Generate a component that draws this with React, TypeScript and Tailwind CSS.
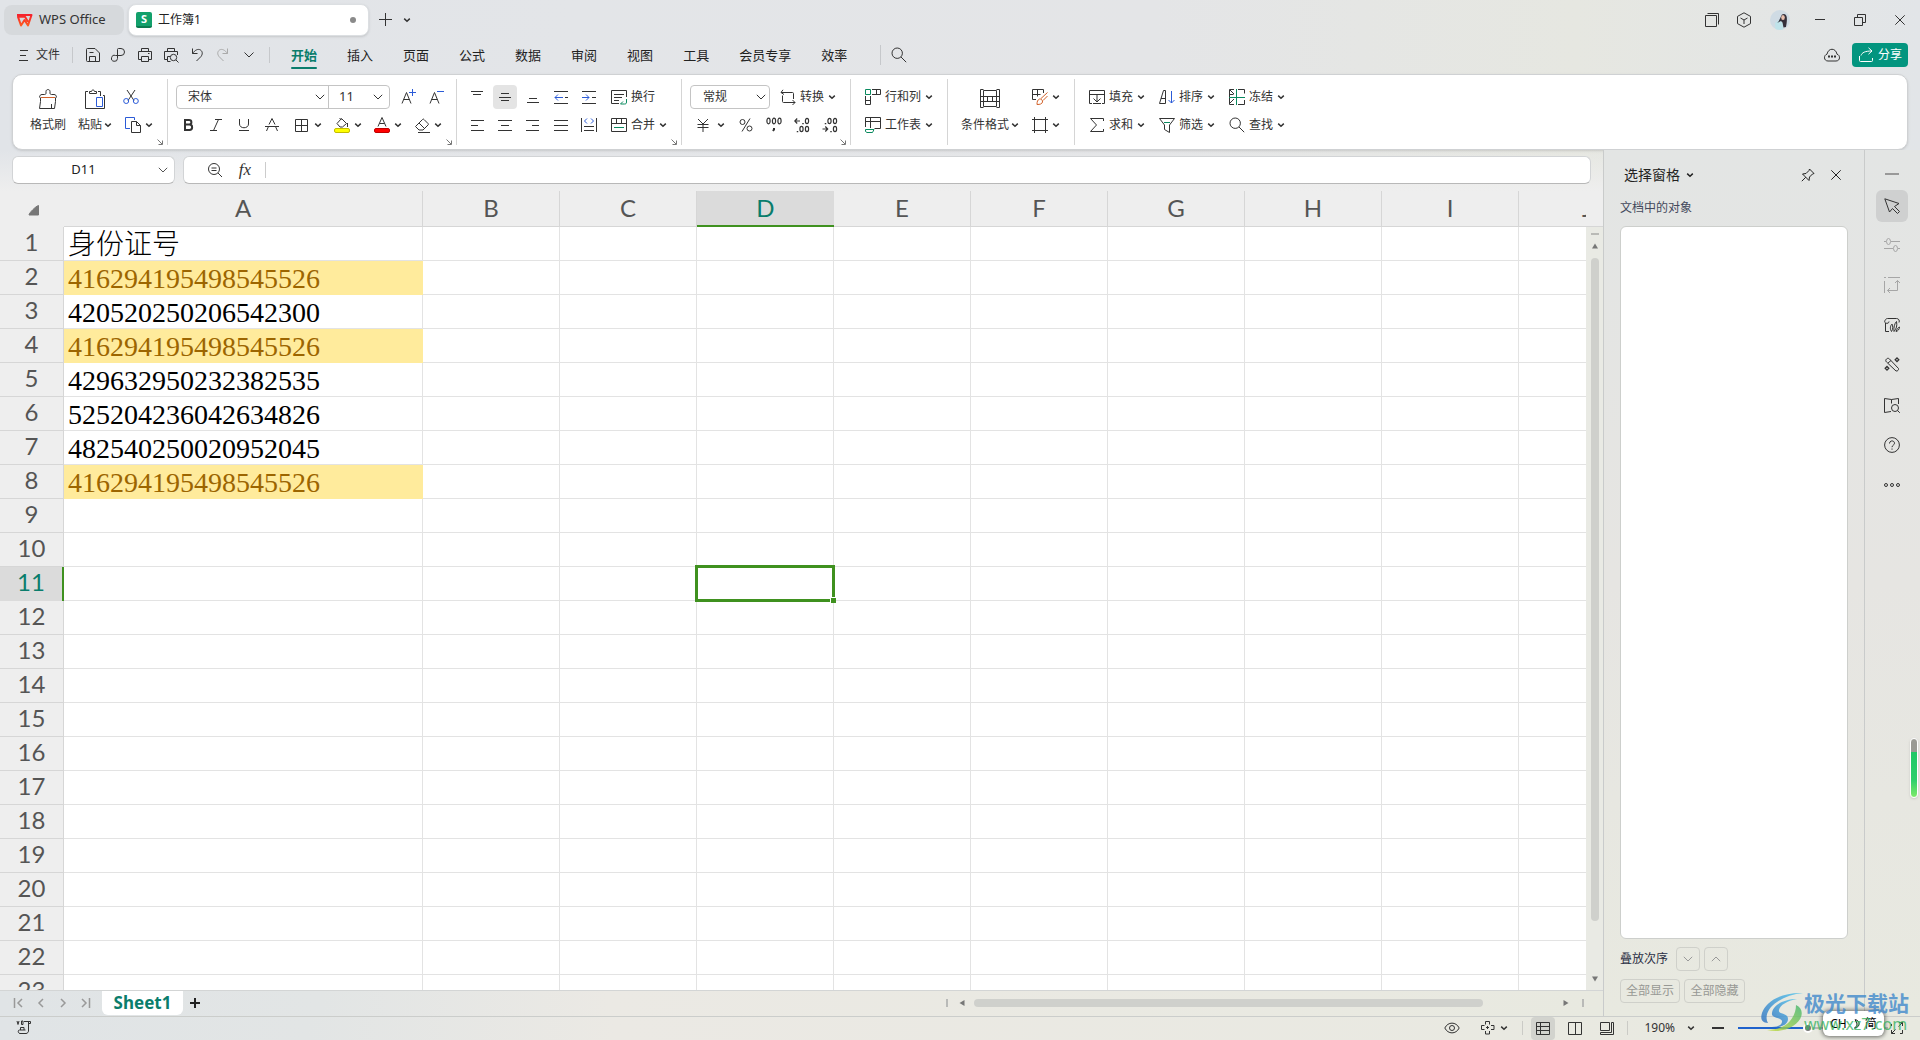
import { useState } from 'react';
import type { ReactNode } from 'react';

interface SvgProps {
  w?: number;
  h?: number;
  sw?: number;
  className?: string;
  children: ReactNode;
}

function Svg({ w = 16, h, sw = 1, className = '', children }: SvgProps) {
  const height = h ?? w;
  return (
    <svg
      width={w}
      height={height}
      viewBox={`0 0 ${w} ${height}`}
      fill="none"
      stroke="currentColor"
      strokeWidth={sw}
      className={`shrink-0 ${className}`}
      aria-hidden="true"
    >
      {children}
    </svg>
  );
}

const BLUE = '#2b5bd7';
const GREEN = '#0a8a5f';
const ORANGE = '#d2622a';

const Caret = ({ className = '' }: { className?: string }) => (
  <Svg w={8} sw={1.5} className={className}><path d="M1.2 2.6 4 5.2l2.8-2.6" /></Svg>
);

const WideCaret = ({ className = '' }: { className?: string }) => (
  <Svg w={10} className={className}><path d="m.8 2.8 4.2 4.2 4.2-4.2" /></Svg>
);

const Launcher = () => (
  <button type="button" aria-label="更多设置" className="absolute right-1 bottom-0 text-[#777]">
    <Svg w={6}><path d="m.5.5 4.6 4.6M1.5 5.5h4v-4" /></Svg>
  </button>
);

const SearchIcon = () => (
  <Svg><circle cx="6.2" cy="6.2" r="5.2" /><path d="m10 10 5.2 5.2" /></Svg>
);

const quickActions: { name: string; icon: ReactNode; faded?: boolean }[] = [
  { name: '保存', icon: <Svg><path d="M1.5 13.5v-11a1 1 0 0 1 1-1H10l4.500 4.500v8.500h-12a1 1 0 0 1-1-1M4.500 14.500v-5h6v5M4.500 5.500h4" /></Svg> },
  { name: '输出为PDF', icon: <Svg><path d="M6.500 10V2.500a1 1 0 0 1 1-1H10a3.500 3.500 0 0 1 0 7H4.500a3 3 0 1 0 2 3V10" /></Svg> },
  { name: '打印', icon: <Svg><path d="M4.500 4.500v-3h7v3M4 12.500H1.500v-8h13v8H12M4.500 9.500h7v5h-7zM11 6.500h1.500" /></Svg> },
  { name: '打印预览', icon: <Svg><path d="M4.500 4.500v-3h7v3M4 12.500H1.500v-8h13V8M7 9.500H4.500v5h3" /><circle cx="10.500" cy="10.500" r="3.200" /><path d="m13 13 2.500 2.500" /></Svg> },
  { name: '撤销', icon: <Svg><path d="M3.500 1.500v5h5M3.500 6.500C6 3 9 1.500 11.500 3c2.500 1.800 2 4.500.5 6.500L7.500 14" /></Svg> },
  { name: '恢复', faded: true, icon: <Svg><path d="M12.500 1.500v5h-5M12.500 6.500C10 3 7 1.500 4.500 3 2 4.800 2.500 7.500 4 9.500L8.500 14" /></Svg> },
  { name: '更多', icon: <Svg w={12}><path d="m1.500 3.500 4.500 4.500 4.500-4.500" /></Svg> },
];

const menuTabs = ['开始', '插入', '页面', '公式', '数据', '审阅', '视图', '工具', '会员专享', '效率'];

function TitleBar() {
  return (
    <header className="flex h-10 shrink-0 items-center pl-1 text-xs text-[#333]">
      <button type="button" className="flex h-[30px] w-[120px] items-center gap-1.5 rounded-lg bg-[#d6d9dc] pl-3">
        <svg width="17" height="13" viewBox="0 0 17 13" aria-hidden="true">
          <defs>
            <linearGradient id="wps" x1="0" y1="0" x2="0" y2="1">
              <stop offset="0" stopColor="#f5222d" />
              <stop offset="1" stopColor="#ff5a1f" />
            </linearGradient>
          </defs>
          <path d="M1 1h14.500L12 11.500 8.500 6 5 11.500 2 2.800h7l3 5" fill="none" stroke="url(#wps)" strokeWidth="2" strokeLinejoin="round" />
        </svg>
        <span className="text-[13px]">WPS Office</span>
      </button>
      <div className="ml-1 flex h-8 w-[241px] items-center rounded-lg border border-[#dcdfe2] bg-white pr-3 pl-[7px] shadow-sm">
        <span className="flex h-4 w-4 items-center justify-center rounded-[2px] border-b-2 border-[#0b7a4f] bg-[#12a06b] text-[11px] font-bold text-white">S</span>
        <span className="ml-1.5 flex-1 text-[#222]">工作簿1</span>
        <span className="h-1.5 w-1.5 rounded-full bg-[#8a8a8a]" />
      </div>
      <button type="button" aria-label="新建" className="ml-2.5">
        <Svg w={14}><path d="M6.500 0v13M0 6.500h13" /></Svg>
      </button>
      <button type="button" aria-label="标签列表" className="ml-2.5"><Caret /></button>
      <div className="ml-auto flex items-center">
        <button type="button" aria-label="窗口" className="flex w-8 justify-center">
          <Svg><path d="M1.500 3.500h11v11h-11zM3.500 1.500h11v11" strokeLinejoin="round" /></Svg>
        </button>
        <button type="button" aria-label="应用" className="flex w-8 justify-center">
          <Svg><path d="M8 .8 14.500 4.400v7.200L8 15.200l-6.500-3.600V4.400zM4.500 6 8 8l3.500-2M8 8v4" /></Svg>
        </button>
        <button type="button" aria-label="账号" className="flex w-10 justify-center">
          <svg width="20" height="20" viewBox="0 0 20 20" aria-hidden="true">
            <circle cx="10" cy="10" r="10" fill="#cfdbe4" />
            <path d="M5 13l5-4 3 4v6.200a10 10 0 0 1-7.500-.3z" fill="#bfe3ea" />
            <path d="M12 4.500c2.500-1.500 4.500 0 4.800 3 .3 3.500-.2 6-.8 9.500l-2.500.5-1-5-1.500-1.500-4 2c2.500-2 3.500-6 5-8.500" fill="#35303b" />
            <ellipse cx="13" cy="7.500" rx="1.800" ry="2.600" fill="#e8bfae" />
          </svg>
        </button>
        <button type="button" aria-label="最小化" className="flex w-10 justify-center"><Svg w={10}><path d="M0 4.500h10" /></Svg></button>
        <button type="button" aria-label="还原" className="flex w-10 justify-center"><Svg w={12}><path d="M.5 3.500h8v8h-8zM3.500 3.500v-3h8v8h-3" /></Svg></button>
        <button type="button" aria-label="关闭" className="flex w-10 justify-center"><Svg w={10}><path d="m.3.3 9.400 9.400M9.700.3.3 9.700" /></Svg></button>
      </div>
    </header>
  );
}

function MenuBar() {
  const [active, setActive] = useState('开始');

  return (
    <nav className="flex h-[30px] shrink-0 items-center pr-3 text-xs text-[#333]">
      <button type="button" className="ml-[19px] flex items-center gap-2">
        <Svg w={9} h={12}><path d="M1 1.500h8M1 6.500h6M0 11.500h9" /></Svg>
        文件
      </button>
      <span className="ml-3 h-4 w-px bg-[#c6c8cb]" />
      <div className="ml-[7px] flex">
        {quickActions.map((a) => (
          <button key={a.name} type="button" aria-label={a.name} className={a.faded ? 'flex w-[26px] items-center justify-center text-[#aaa]' : 'flex w-[26px] items-center justify-center'}>
            {a.icon}
          </button>
        ))}
      </div>
      <span className="ml-[7px] h-4 w-px bg-[#c6c8cb]" />
      <div className="ml-1.5 flex h-full text-[13px] text-[#222]">
        {menuTabs.map((tab) => (
          <button key={tab} type="button" onClick={() => setActive(tab)} className="flex h-full flex-col items-center px-[15px]">
            <span className={active === tab ? 'h-[27px] pt-[5px] leading-5 font-bold text-[#0a7d6c]' : 'h-[27px] pt-[5px] leading-5'}>{tab}</span>
            {active === tab && <span className="h-0.5 w-[26px] rounded-full bg-[#0a7d6c]" />}
          </button>
        ))}
      </div>
      <span className="ml-[18px] h-5 w-px bg-[#c6c8cb]" />
      <button type="button" aria-label="搜索" className="ml-2.5"><SearchIcon /></button>
      <button type="button" aria-label="云同步" className="ml-auto">
        <Svg>
          <path d="M4 14h8c4.500 0 4.500-6 1-6.800C11.800.6 4.200.6 3 7.200-.5 8-.5 14 4 14z" />
          <path d="M4 9.500h2M7 9.500h2M10 9.500h2" strokeWidth="2" />
        </Svg>
      </button>
      <button type="button" className="ml-3 flex h-6 w-14 items-center gap-1 rounded bg-[#03957f] pl-1.5 text-white">
        <Svg><path d="M1.500 9v4.500a1 1 0 0 0 1 1h11a1 1 0 0 0 1-1V11" /><path d="M3 8.500c1-3 4-4.500 11-4.500M10.500.8 14 4l-3.500 3.200" /></Svg>
        分享
      </button>
    </nav>
  );
}

interface ToolProps {
  name: string;
  icon: ReactNode;
  caret?: boolean;
}

// icon and label side by side, 24px for the icon
function LabelTool({ name, icon, caret = true }: ToolProps) {
  return (
    <button type="button" className="flex h-7 items-center">
      <span className="flex w-6 justify-center">{icon}</span>
      {name}
      {caret && <Caret className="ml-1" />}
    </button>
  );
}

function IconTool({ name, icon }: ToolProps) {
  return (
    <button type="button" aria-label={name} className="flex h-7 w-7 items-center justify-center">
      {icon}
    </button>
  );
}

function CaretTool({ name, icon }: ToolProps) {
  return (
    <button type="button" aria-label={name} className="flex h-7 w-10 items-center gap-1 pl-2">
      {icon}
      <Caret />
    </button>
  );
}

function Group({ className, launcher, children }: { className: string; launcher?: boolean; children: ReactNode }) {
  return (
    <div className={`relative flex shrink-0 border-r border-[#d5d5d5] pt-1 ${className}`}>
      {children}
      {launcher && <Launcher />}
    </div>
  );
}

const vAlign = [
  { name: '顶端对齐', icon: <Svg><path d="M2 2.500h12M4 5.500h8" /></Svg> },
  { name: '垂直居中', icon: <Svg><path d="M4 4.500h8M2 8.500h12M4 11.500h8" /></Svg> },
  { name: '底端对齐', icon: <Svg><path d="M4 9.500h8M2 13.500h12" /></Svg> },
  { name: '减少缩进', icon: <Svg><path d="M1 2.500h14M12 8.500h3M1 14.500h14" /><path d="M10 8.500H2M5 5.500l-3 3 3 3" stroke={BLUE} /></Svg> },
  { name: '增加缩进', icon: <Svg><path d="M1 2.500h14M11 8.500h4M1 14.500h14" /><path d="M1 8.500h7M5 5.500l3 3-3 3" stroke={BLUE} /></Svg> },
];

const hAlign = [
  { name: '左对齐', icon: <Svg><path d="M2 3.500h13M2 8.500h7M2 13.500h13" /></Svg> },
  { name: '居中', icon: <Svg><path d="M1 3.500h14M4 8.500h8M1 13.500h14" /></Svg> },
  { name: '右对齐', icon: <Svg><path d="M1 3.500h13M7 8.500h7M1 13.500h13" /></Svg> },
  { name: '两端对齐', icon: <Svg><path d="M1 3.500h14M1 8.500h14M1 13.500h14" /></Svg> },
  { name: '分散对齐', icon: <Svg><path d="M.5 1v14M15.500 1v14M3 9.500h10M3 13.500h10" /><path d="M6 1.500 3.500 4 6 6.500M10 1.500 12.500 4 10 6.500" stroke={BLUE} /></Svg> },
];

// zeros drawn as small ovals beside a decimal point
const decimalsUp = (
  <Svg sw={1.2}>
    <path d="M6 4H.8M3.200 1.500.8 4l2.400 2.500" />
    <path d="M9 6v1.200M3.500 14v1.200" strokeWidth="1.500" />
    <ellipse cx="13" cy="4" rx="1.600" ry="2.700" />
    <ellipse cx="7.500" cy="12" rx="1.600" ry="2.700" />
    <ellipse cx="13" cy="12" rx="1.600" ry="2.700" />
  </Svg>
);

const decimalsDown = (
  <Svg sw={1.2}>
    <path d="M.5 12h5.200M3.300 9.500 5.700 12l-2.400 2.500" />
    <path d="M3.500 6v1.200M9 14v1.200" strokeWidth="1.500" />
    <ellipse cx="7.500" cy="4" rx="1.600" ry="2.700" />
    <ellipse cx="13" cy="4" rx="1.600" ry="2.700" />
    <ellipse cx="13" cy="12" rx="1.600" ry="2.700" />
  </Svg>
);

function Ribbon() {
  return (
    <section className="mx-3 mt-1 flex h-[76px] shrink-0 overflow-hidden rounded-[10px] border border-[#cfd1d3] bg-white py-1 text-xs text-[#333] shadow-sm">
      <Group className="w-[155px]" launcher>
        <button type="button" className="ml-[17px] flex flex-col items-center pt-1.5">
          <Svg w={20}>
            <path d="M1.500 8.500c0-2 1-3 2.500-3h2.500c1 0 1.500-.5 1.500-1.500V2.500c0-2.600 4-2.600 4 0V4c0 1 .5 1.500 1.500 1.500H16c1.500 0 2.500 1 2.500 3M2.500 8.500v4L1.500 19.500h15l1-7v-4M13.500 19v-4" />
            <path d="M3 8.500h14" stroke={ORANGE} />
          </Svg>
          <span className="mt-2 leading-4">格式刷</span>
        </button>
        <button type="button" className="ml-3 flex flex-col pt-1.5">
          <Svg w={22} h={20} className="ml-1.5">
            <path d="M4 2.500H1.500v17H10M14 2.500h2.500V7M5.500 4.500v-2h2c0-2 3-2 3 0h2v2z" />
            <path d="M19 6.500h1.500v13H10" />
            <path d="M12.500 8.500h6v9h-6z" stroke={BLUE} fill="white" />
          </Svg>
          <span className="mt-2 flex items-center leading-4">粘贴<Caret className="ml-0.5" /></span>
        </button>
        <div className="ml-[7px]">
          <button type="button" aria-label="剪切" className="flex h-7 items-center pl-1">
            <Svg><path d="M4 1 11 11.500M12 1 5 11.500" /><circle cx="3.200" cy="12" r="2.500" stroke={BLUE} /><circle cx="12.800" cy="12" r="2.500" stroke={BLUE} /></Svg>
          </button>
          <button type="button" aria-label="复制" className="flex h-7 items-center gap-1 pl-1.5">
            <Svg><path d="M5 11.500H.5v-11h9V3" stroke={BLUE} /><path d="M6.500 4.500h5l4 4v7h-9zM11.500 4.500v4h4" /></Svg>
            <Caret />
          </button>
        </div>
      </Group>

      <Group className="w-[289px] flex-col pl-2" launcher>
        <div className="flex h-7 items-center">
          <div className="flex h-6 rounded border border-[#c4c4c4]">
            <label className="relative flex items-center">
              <select aria-label="字体" className="h-full w-[152px] appearance-none border-r border-[#c4c4c4] pl-[11px] outline-none"><option>宋体</option></select>
              <WideCaret className="pointer-events-none absolute right-1" />
            </label>
            <label className="relative flex items-center">
              <select aria-label="字号" className="h-full w-[60px] appearance-none rounded pl-2.5 text-[13px] outline-none"><option>11</option></select>
              <WideCaret className="pointer-events-none absolute right-1.5" />
            </label>
          </div>
          <div className="ml-[5px] flex">
            <IconTool name="增大字号" icon={<Svg><path d="M1 14.500 5.500 3.500l4.500 11M2.500 10.500h6" /><path d="M8 3.500h7M11.500 0v7" stroke={BLUE} /></Svg>} />
            <IconTool name="减小字号" icon={<Svg><path d="M1 14.500 5.500 3.500l4.500 11M2.500 10.500h6" /><path d="M8 2.500h7" stroke={BLUE} /></Svg>} />
          </div>
        </div>
        <div className="flex h-7 items-center">
          <div className="-ml-0.5 flex">
            <IconTool name="加粗" icon={<Svg sw={2}><path d="M5 3h4c3.200 0 3.200 4.500 0 4.500H5h4.500c3.500 0 3.500 5.500 0 5.500H5z" /></Svg>} />
            <IconTool name="倾斜" icon={<Svg><path d="M7 2.500h7M2 13.500h7M10.500 2.500l-5 11" /></Svg>} />
            <IconTool name="下划线" icon={<Svg><path d="M3.500 2v5c0 5 9 5 9 0V2M3 13.500h10" /></Svg>} />
            <IconTool name="删除线" icon={<Svg><path d="M5 7.500 8 1.500l3 6M4.500 9.500 2.500 14M11.500 9.500l2 4.500M1 9.500h14" /></Svg>} />
          </div>
          <CaretTool name="边框" icon={<Svg><path d="M1.500 2.500h12v12h-12zM7.500 2.500v12M1.500 8.500h12" /></Svg>} />
          <CaretTool name="填充颜色" icon={<Svg><path d="m7.500 1.500 5 5-4 3.500H6L3 6.500zM5.500 1l2 2M13.500 6v4" /><rect x=".5" y="11.500" width="15" height="4" rx="1.500" fill="#ffff00" stroke="#c4bd00" /></Svg>} />
          <CaretTool name="字体颜色" icon={<Svg><path d="m4 9.500 4-9 4 9M5.500 6.500h5" /><rect x=".5" y="11.500" width="15" height="4" rx="1.500" fill="#ff0000" stroke="#c00000" /></Svg>} />
          <CaretTool name="清除" icon={<Svg><path d="M1.500 9.500 8.500 2.500c.6-.6 1-.6 1.500 0L14 6.500c.5.5.5 1 0 1.500l-5 5H5L1.500 9.500zM5 6l5.500 5.500M4 15.500h12" /></Svg>} />
        </div>
      </Group>

      <Group className="w-[225px] flex-col pl-1.5" launcher>
        <div className="flex h-7 items-center">
          {vAlign.map((t, i) => (
            <button key={t.name} type="button" aria-label={t.name} className="flex h-7 w-7 items-center justify-center">
              <span className={i === 1 ? 'flex h-6 w-6 items-center justify-center rounded bg-[#e4e4e4]' : ''}>{t.icon}</span>
            </button>
          ))}
          <span className="w-1" />
          <LabelTool name="换行" caret={false} icon={<Svg><path d="M8 14.500H.5V1.500h15V8M3 5.500h10M3 8.500h8M3 11.500h5" /><path d="M15.500 10v3c0 1.500-.5 2-2 2h-4m2.500-2.500L9.500 15" stroke={GREEN} /></Svg>} />
        </div>
        <div className="flex h-7 items-center">
          {hAlign.map((t) => <IconTool key={t.name} {...t} />)}
          <span className="w-1" />
          <LabelTool name="合并" icon={<Svg><path d="M.5 1.500h15v13H.5zM.5 6.500h15M5.500 1.500v5M10.500 1.500v5" /><path d="M3 10.500h10" stroke={GREEN} /></Svg>} />
        </div>
      </Group>

      <Group className="w-[169px] flex-col pl-2" launcher>
        <div className="flex h-7 items-center">
          <label className="relative flex items-center">
            <select aria-label="数字格式" className="h-6 w-20 appearance-none rounded border border-[#c4c4c4] pl-3 outline-none"><option>常规</option></select>
            <WideCaret className="pointer-events-none absolute right-1" />
          </label>
          <span className="w-1.5" />
          <LabelTool name="转换" icon={<Svg><path d="M3 .8 1 3.500l3 2M1 3.500h11.500c.6 0 1 .4 1 1V10M2.500 6.500v6c0 .6.4 1 1 1H15M12.500 11l2.500 2.500-2.500 2.500" /></Svg>} />
        </div>
        <div className="flex h-7 items-center">
          <button type="button" aria-label="货币格式" className="flex h-7 w-[42px] items-center gap-1.5 pl-[5px]">
            <Svg><path d="m3 2 5 5 5-5M8 7v8M2.500 7.500h11M2.500 10.500h11" /></Svg>
            <Caret />
          </button>
          <IconTool name="百分比" icon={<Svg><circle cx="4.500" cy="5" r="2.500" /><circle cx="11.500" cy="11.500" r="2.500" /><path d="m12 1.500-8 13" /></Svg>} />
          <IconTool name="千位分隔" icon={<Svg sw={1.2}><ellipse cx="2.500" cy="4" rx="1.600" ry="2.800" /><ellipse cx="8" cy="4" rx="1.600" ry="2.800" /><ellipse cx="13.500" cy="4" rx="1.600" ry="2.800" /><path d="M8 11v1.500L7 14" strokeWidth="2" /></Svg>} />
          <IconTool name="增加小数位" icon={decimalsUp} />
          <IconTool name="减少小数位" icon={decimalsDown} />
        </div>
      </Group>

      <Group className="w-[97px] flex-col pl-2.5">
        <LabelTool name="行和列" icon={<Svg><path d="M7 .5h8.500v5H7M11.500.5v5M.5 7v8.500h5V7M.5 11.500h5" /><path d="M.5.5h5v5h-5z" stroke={GREEN} /></Svg>} />
        <LabelTool name="工作表" icon={<Svg><path d="M.5 10V.5h15v11H9.500M.5 4.500h15M5.500.5V11" /><path d="M.5 12.500h8.500l-1.500 3H2l-1.500-1z" stroke={GREEN} /></Svg>} />
      </Group>

      <Group className="w-[127px] pl-[13px]">
        <button type="button" className="flex flex-col pt-1.5">
          <Svg w={20} className="ml-[19px]"><path d="M3.500.5H.5v18h3M16.500.5h3v18h-3M3.500 1.500h13v16h-13zM.5 7.500h3M.5 12.500h3M16.500 7.500h3M16.500 12.500h3M3.500 7.500h13M3.500 12.500h13M7.500 7.500v5M12.500 7.500v5" /></Svg>
          <span className="mt-2 flex items-center leading-4">条件格式<Caret className="ml-0.5" /></span>
        </button>
        <div className="ml-[7px]">
          <button type="button" aria-label="表格样式" className="flex h-7 items-center gap-1 pl-1.5">
            <Svg><path d="M4 10.500H.5V.5h11V4M.5 5.500h8M5.500.5v7" /><path d="M15.500 3.500 9 9.500M15.500 7 11 11.500M5 15.500c0-3 .5-4.500 2.500-5.500 1.500-.5 3.500 1.500 3 3-.5 2-2.500 2.500-5.500 2.500z" stroke={ORANGE} /></Svg>
            <Caret />
          </button>
          <button type="button" aria-label="单元格样式" className="flex h-7 items-center gap-1 pl-1.5">
            <Svg><path d="M2.500 0v16M13.500 0v16M0 2.500h16M0 13.500h16" /></Svg>
            <Caret />
          </button>
        </div>
      </Group>

      <div className="grid shrink-0 auto-rows-min grid-cols-[70px_70px_70px] pt-1 pl-2.5">
        <LabelTool name="填充" icon={<Svg><path d="M3 14.500H.5v-13h15v13H13M.5 5.500h15M8 5.500V13M4.500 9.500 8 13l3.500-3.500M4 14.500h8" /></Svg>} />
        <LabelTool name="排序" icon={<Svg><path d="M.5 14.500 4.500 1.500h2v13zM2 9.500h4.500" /><path d="M12.500 2v12M9.500 11l3 3 3-3" stroke={BLUE} /></Svg>} />
        <LabelTool name="冻结" icon={<Svg><path d="M5 .5H.5v15H5M9 .5h6.500v4M15.500 11v4.500H9M1 1l4 4M5 10l-4 4M.5 5.500h4" /><path d="M7.500 0v16M0 8.500h16" stroke={GREEN} /></Svg>} />
        <LabelTool name="求和" icon={<Svg><path d="M14.500 4V1.500h-13L7.500 8l-6 6.500h13V12" /></Svg>} />
        <LabelTool name="筛选" icon={<Svg><path d="M.5 1.500h15L10.500 8v7.500l-5-3V8z" /><path d="M5 5.500h6" stroke={GREEN} /></Svg>} />
        <LabelTool name="查找" icon={<SearchIcon />} />
      </div>
    </section>
  );
}

function FormulaBar() {
  return (
    <div className="flex h-[41px] shrink-0 bg-linear-to-b from-transparent to-[#eeeeee] px-3 pt-1.5">
      <div className="relative flex h-7 w-[163px] items-center rounded-md border border-[#d2d4d6] border-b-[#b8b8b8] bg-white">
        <input aria-label="名称框" defaultValue="D11" className="w-full bg-transparent pr-5 text-center text-[13px] text-[#222] outline-none" />
        <WideCaret className="absolute right-1.5 text-[#555]" />
      </div>
      <div className="ml-2 flex h-7 flex-1 items-center rounded-md border border-[#d2d4d6] border-b-[#b8b8b8] bg-white text-[#333]">
        <button type="button" aria-label="放大" className="ml-[23px]">
          <Svg><circle cx="7" cy="7" r="5.500" /><path d="m11 11 4 4M4.500 6h5M4.500 8.500h5" /></Svg>
        </button>
        <button type="button" aria-label="插入函数" className="ml-3.5 w-4 font-['Liberation_Serif'] text-[17px] leading-5 italic">fx</button>
        <span className="ml-3 h-4 w-px bg-[#ccc]" />
        <input aria-label="编辑栏" className="h-full flex-1 bg-transparent px-2 text-sm outline-none" />
      </div>
    </div>
  );
}

const columns = ['A', 'B', 'C', 'D', 'E', 'F', 'G', 'H', 'I', 'J'];

const cells: Record<number, { value: string; repeated?: boolean }> = {
  1: { value: '身份证号' },
  2: { value: '416294195498545526', repeated: true },
  3: { value: '420520250206542300' },
  4: { value: '416294195498545526', repeated: true },
  5: { value: '429632950232382535' },
  6: { value: '525204236042634826' },
  7: { value: '482540250020952045' },
  8: { value: '416294195498545526', repeated: true },
};

const rows = Array.from({ length: 24 }, (_, i) => i + 1);

function cellClass(repeated: boolean, active: boolean) {
  if (repeated) {
    return "border-r border-b border-[#ffeb9c] bg-[#ffeb9c] p-0 pl-1 align-bottom font-['Liberation_Serif'] text-[28px] leading-[30px] text-[#9c6500]";
  }
  if (active) {
    return 'relative z-10 border-r border-b border-[#e3e3e3] p-0';
  }
  return "border-r border-b border-[#e3e3e3] p-0 pl-1 align-bottom font-['Liberation_Serif','Noto_Sans_CJK_SC',serif] text-[28px] leading-[30px] font-light text-black";
}

function Grid() {
  const [selected, setSelected] = useState({ col: 'D', row: 11 });

  return (
    <div className="min-w-0 flex-1 overflow-hidden bg-white">
      <table className="w-[1655px] table-fixed border-separate border-spacing-0 text-[#555]">
        <colgroup>
          <col className="w-16" />
          {columns.map((c) => <col key={c} className={c === 'A' ? 'w-[359px]' : 'w-[137px]'} />)}
        </colgroup>
        <thead className="font-['Lato','Noto_Sans',sans-serif] text-2xl leading-7">
          <tr className="h-9">
            <th className="border-b border-[#eee] bg-[#eee] p-0 pt-1">
              <Svg w={11} className="ml-7"><path d="M10.500.5v9.500H1C1 8 8 1 10.500.5z" fill="#777" stroke="#777" /></Svg>
            </th>
            {columns.map((c) => (
              <th
                key={c}
                className={
                  c === selected.col
                    ? 'border-b-2 border-[#3f911f] bg-[#dbdbdb] p-0 pb-px font-normal text-[#0a7d6c]'
                    : 'border-r border-b border-[#d6d6d6] bg-[#eee] p-0 pb-0.5 font-normal'
                }
              >
                {c}
              </th>
            ))}
          </tr>
        </thead>
        <tbody>
          {rows.map((r) => (
            <tr key={r} className="h-[34px]">
              <th
                className={
                  r === selected.row
                    ? "border-r-2 border-[#3f911f] bg-[#dbdbdb] p-0 pb-1 font-['Lato','Noto_Sans',sans-serif] text-2xl leading-7 font-normal text-[#0a7d6c]"
                    : "border-r border-b border-[#d6d6d6] bg-[#eee] p-0 pb-[3px] font-['Lato','Noto_Sans',sans-serif] text-2xl leading-7 font-normal"
                }
              >
                {r}
              </th>
              {columns.map((c) => {
                const cell = c === 'A' ? cells[r] : undefined;
                const active = c === selected.col && r === selected.row;

                return (
                  <td
                    key={c}
                    onClick={() => setSelected({ col: c, row: r })}
                    className={cellClass(Boolean(cell?.repeated), active)}
                  >
                    {cell?.value}
                    {active && (
                      <div className="absolute -inset-0.5 border-[3px] border-[#3f911f]">
                        <span className="absolute -right-1 -bottom-1 h-1.5 w-1.5 border-t border-l border-white bg-[#3f911f]" />
                      </div>
                    )}
                  </td>
                );
              })}
            </tr>
          ))}
        </tbody>
      </table>
    </div>
  );
}

function VerticalScroll() {
  return (
    <div className="flex w-[17px] shrink-0 flex-col items-center bg-[#e9eae4] text-[#777]">
      <div className="h-9 w-full border-b border-[#d6d6d6] bg-[#eee]" />
      <span className="mt-1.5 h-0.5 w-2 bg-[#b9bab6]" />
      <Svg w={8} className="mt-[7px]"><path d="m4 1.500 3 5H1z" fill="currentColor" stroke="none" /></Svg>
      <span className="mt-2 w-2 flex-1 rounded-full bg-[#cfd0cc]" />
      <Svg w={8} className="mt-[54px] mb-[7px]"><path d="m4 6.500 3-5H1z" fill="currentColor" stroke="none" /></Svg>
    </div>
  );
}

function SheetTabs() {
  return (
    <div className="flex h-[26px] shrink-0 items-center border-t border-[#d3d5d5] pb-px text-[#999]">
      <div className="flex w-[102px] pl-2">
        {['M1.500 1v10M9 2 5 6l4 4', 'M8 2 4 6l4 4', 'm4 2 4 4-4 4', 'M10.500 1v10M3 2l4 4-4 4'].map((d) => (
          <button key={d} type="button" aria-label="切换工作表" className="flex w-[22px] justify-center">
            <Svg w={12} sw={1.5}><path d={d} /></Svg>
          </button>
        ))}
      </div>
      <button type="button" className="-mt-px h-6 w-[81px] rounded-b-md bg-white text-[17px] leading-6 font-bold text-[#0a7d6c]">Sheet1</button>
      <button type="button" aria-label="新建工作表" className="ml-[7px] text-[#222]"><Svg w={10} sw={2}><path d="M5 0v10M0 5h10" /></Svg></button>
      <div className="ml-auto flex w-[657px] items-center text-[#777]">
        <span className="h-2 w-0.5 bg-[#b9bab8]" />
        <Svg w={8} className="ml-2.5"><path d="m1.500 4 5-3v6z" fill="currentColor" stroke="none" /></Svg>
        <span className="ml-2 h-2 w-[509px] rounded-full bg-[#cfd0cc]" />
        <Svg w={8} className="ml-auto"><path d="m6.500 4-5-3v6z" fill="currentColor" stroke="none" /></Svg>
        <span className="mr-[19px] ml-3 h-2 w-0.5 bg-[#b9bab8]" />
      </div>
    </div>
  );
}

function SelectionPane() {
  return (
    <aside className="flex w-[261px] shrink-0 flex-col border-l border-[#c9cbcb] px-4 text-xs">
      <div className="flex h-[41px] items-center pt-2 pl-1 text-sm text-[#222]">
        <button type="button" className="flex items-center">选择窗格<Caret className="ml-1.5" /></button>
        <button type="button" aria-label="固定" className="ml-auto">
          <Svg w={14}><path d="M8.500 1 13 5.500l-1.500.5-3 3-.5 3.500L1.500 6 5 5.500l3-3zM4.800 9.200.8 13.200" /></Svg>
        </button>
        <button type="button" aria-label="关闭窗格" className="mr-[7px] ml-4"><Svg w={10}><path d="m.3.3 9.400 9.400M9.700.3.3 9.700" /></Svg></button>
      </div>
      <p className="pt-[9px] pb-2.5 leading-4 text-[#44495c]">文档中的对象</p>
      <div className="min-h-0 flex-1 rounded-md border border-[#cdcfcc] bg-white" />
      <div className="mt-2 flex items-center text-[#2b2f44]">
        叠放次序
        <button type="button" aria-label="下移" className="ml-2 flex h-6 w-6 items-center justify-center rounded border border-[#cfd0ca] text-[#999]"><WideCaret /></button>
        <button type="button" aria-label="上移" className="ml-1 flex h-6 w-6 items-center justify-center rounded border border-[#cfd0ca] text-[#999]"><WideCaret className="rotate-180" /></button>
      </div>
      <div className="mt-2 mb-[13px] flex gap-1 text-[#979894]">
        <button type="button" className="h-6 w-[60px] rounded border border-[#cfd0ca]">全部显示</button>
        <button type="button" className="h-6 w-[61px] rounded border border-[#cfd0ca]">全部隐藏</button>
      </div>
    </aside>
  );
}

const sideTools: { name: string; icon: ReactNode; faded?: boolean }[] = [
  { name: '属性', faded: true, icon: <Svg><path d="M0 4.500h2M7 4.500h9M0 11.500h9M14 11.500h2" /><ellipse cx="4.500" cy="4.500" rx="2" ry="3" /><ellipse cx="11.500" cy="11.500" rx="2" ry="3" /></Svg> },
  { name: '调整', faded: true, icon: <Svg><path d="M0 .5h2M4 .5h12M.5 4v12M3.500 13.500h10v-10M6 11l-2.500 2.500L6 16M11 6l2.500-2.500L16 6" /></Svg> },
  { name: '图表', icon: <Svg><path d="M1.500 6v8.500H5M1.500 6c-2-1 0-4.500 2-4.500h9c2 0 3.500 2 2.500 4M1.500 6c2 .8 3.500 0 3.500-1.500" /><path d="M7.500 14.500c-2-3-1-6 .5-7.500 1 2.500 1.200 5-.5 7.500zm2.500 0c-.5-4 .5-8 2.500-10 .8 4 0 7.500-2.500 10zm2 0c1-2.500 2-4 3.500-4.500-.2 2.500-1.500 4-3.500 4.500z" /></Svg> },
  { name: '智能工具', icon: <Svg><path d="M2.500 2c1-1 2-1 3 0l9 9.500c.5 1-.8 3-2.500 2.500L2.500 5c-1-1-1-2 0-3zM4 6l3-2.500" /><path d="m13 1 1.800 1.800L13 4.600l-1.800-1.800zM3 9.500l1.800 1.800L3 13.100l-1.800-1.800z" strokeWidth="1.300" /></Svg> },
  { name: '查阅', icon: <Svg><path d="M7 14.500.500 15.500v-14L7.500 2.500l7-1V7M7.500 2.500v4" /><circle cx="11" cy="11" r="3.500" /><path d="m13.500 13.500 2.300 2.300" /></Svg> },
  { name: '帮助', icon: <Svg><circle cx="8" cy="8" r="7.400" /><path d="M5.500 6.500c0-3.500 5-3.300 5-.3 0 2-2.500 2-2.500 4M8 11.500v1.200" /></Svg> },
  { name: '更多', icon: <Svg><circle cx="2" cy="8" r="1.500" /><circle cx="8" cy="8" r="1.500" /><circle cx="14" cy="8" r="1.500" /></Svg> },
];

function SideStrip() {
  return (
    <aside className="flex w-14 shrink-0 flex-col items-center border-l border-[#c9cbcb] pt-[23px] pr-0.5 text-[#333]">
      <span className="h-0.5 w-3.5 bg-[#999]" />
      <button type="button" aria-label="选择" className="mt-[15px] mb-[3px] flex h-8 w-8 items-center justify-center rounded-md bg-[#cfd0d0]">
        <Svg><path d="M.8.8 15 5.500 10.500 8.500l5 5-2 2-5-5L5.500 14z" /></Svg>
      </button>
      {sideTools.map((t) => (
        <button key={t.name} type="button" aria-label={t.name} className={t.faded ? 'flex h-10 w-8 items-center justify-center text-[#a6a6a6]' : 'flex h-10 w-8 items-center justify-center'}>
          {t.icon}
        </button>
      ))}
    </aside>
  );
}

function StatusBar() {
  return (
    <footer className="flex h-6 shrink-0 items-center border-t border-[#cbcdcb] pr-4 pb-px text-[#333]">
      <button type="button" aria-label="宏" className="ml-4">
        <Svg><path d="m1 1 1 3.500L3 1M5.500 1v3.500H7V1zM8 1.500h6.500v2H13M12.500 2v9c0 1-1 2.500-2.500 2.500H4c-2 0-2.500-3.500-.5-3.500h6M4.500 10V7.500H8V10" /></Svg>
      </button>
      <button type="button" aria-label="护眼" className="ml-auto flex w-8 justify-center">
        <Svg><path d="M.8 8C4 1.500 12 1.500 15.200 8 12 14.500 4 14.500.8 8z" /><circle cx="8" cy="8" r="2.500" /></Svg>
      </button>
      <button type="button" aria-label="聚光灯" className="ml-3 flex items-center gap-1">
        <Svg><path d="M5.500 4.500v-3h4v3M5.500 11v3h4v-3M4.500 5.500h-3v4h3M11 5.500h3v4h-3M6 7.500h3M7.500 6v3" /></Svg>
        <Caret />
      </button>
      <span className="ml-3.5 h-3.5 w-px bg-[#cbcbc6]" />
      <button type="button" aria-label="普通视图" className="ml-2 flex h-[23px] w-6 items-center justify-center rounded bg-[#d2d3ce]">
        <Svg><path d="M1.500 2.500h13v12h-13zM1.500 6.500h13M1.500 10.500h13M5.500 2.500v12" /></Svg>
      </button>
      <button type="button" aria-label="分页预览" className="ml-2 flex w-6 justify-center"><Svg><path d="M1.500 2.500h13v12h-13zM8.500 2.500v12" /></Svg></button>
      <button type="button" aria-label="阅读视图" className="ml-2 flex w-6 justify-center"><Svg><path d="M1.500 2.500h9v8h-9zM12.500 2.500h2v12h-13v-2h11z" /></Svg></button>
      <span className="ml-2 h-3.5 w-px bg-[#cbcbc6]" />
      <button type="button" className="ml-4 flex items-center gap-3 text-xs">190%<Caret /></button>
      <button type="button" aria-label="缩小" className="ml-[17px]"><Svg w={12} sw={2}><path d="M0 6h12" /></Svg></button>
      <input
        type="range"
        aria-label="缩放"
        min={10}
        max={400}
        defaultValue={190}
        className="ml-3.5 h-0.5 w-[150px] appearance-none bg-[linear-gradient(90deg,#1f62cc_68px,#b5b8b5_68px)] [&::-webkit-slider-thumb]:h-2.5 [&::-webkit-slider-thumb]:w-2.5 [&::-webkit-slider-thumb]:appearance-none [&::-webkit-slider-thumb]:rounded-full [&::-webkit-slider-thumb]:border-2 [&::-webkit-slider-thumb]:border-white [&::-webkit-slider-thumb]:bg-[#777]"
      />
      <button type="button" aria-label="全屏" className="ml-0.5">
        <Svg w={14}><path d="M9 1.500h3.500V5M12.500 1.500 8.500 5.500M5 12.500H1.500V9M1.500 12.500l4-4M1.500 5V3M12.500 9v3.500H10" /></Svg>
      </button>
    </footer>
  );
}

function ImeBadge() {
  return (
    <div className="absolute right-9 bottom-1 flex h-[25px] w-[61px] items-center justify-center gap-1 rounded-md bg-white text-xs text-black shadow-[0_0_4px_1px_rgba(0,0,0,0.55)]">
      CH
      <Svg w={10}><path d="M4 .8c5 0 6 7.500-.5 8.200C7 7 6.500 3.500 4 .8z" /></Svg>
      简
    </div>
  );
}

function SiteMark() {
  return (
    <div className="pointer-events-none absolute right-2.5 bottom-[7px] flex items-start opacity-80">
      <svg width="44" height="42" viewBox="0 0 44 42" aria-hidden="true">
        <defs>
          <linearGradient id="swooshBlue" x1="0" y1="1" x2="1" y2="0">
            <stop offset="0" stopColor="#2c6fc0" />
            <stop offset="1" stopColor="#4cc4ee" />
          </linearGradient>
          <linearGradient id="swooshGreen" x1="0" y1="1" x2="1" y2="0">
            <stop offset="0" stopColor="#c6dc3c" />
            <stop offset="1" stopColor="#3fb56d" />
          </linearGradient>
        </defs>
        <path d="M43 2C22 1 6 10 2 22c-2 6 0 10 6 10-4-7 1-16 9-21C24 6 33 3 43 2z" fill="url(#swooshBlue)" />
        <path d="M37 8c-13 0-24 6-25 14-1 6 11 4 10 9-.5 3-4 5-10 5 8 1 16-2 16-8 0-7-10-4-9-9 1-5 8-9 18-11z" fill="url(#swooshBlue)" />
        <path d="M36 14c9 4 7 15-3 21-8 5-17 6-26 4 11 0 19-4 23-9 4-5 6-10 6-16z" fill="url(#swooshGreen)" />
      </svg>
      <div className="flex w-[106px] flex-col">
        <span className="text-[21px] leading-6 font-bold whitespace-nowrap text-[#4189cc]">极光下载站</span>
        <span className="text-base leading-[18px] whitespace-nowrap text-[#3bb464]">www.xz7.com</span>
      </div>
    </div>
  );
}

export default function App() {
  return (
    <div className="relative flex h-screen flex-col overflow-hidden bg-[linear-gradient(90deg,#e1e4e8_0%,#e3e5e8_30%,#e4e5e7_60%,#e6e7e1_82%,#e2e5e8_100%)] font-['Noto_Sans','Noto_Sans_CJK_SC',sans-serif]">
      <TitleBar />
      <MenuBar />
      <Ribbon />
      <div className="flex min-h-0 flex-1">
        <main className="flex min-w-0 flex-1 flex-col">
          <FormulaBar />
          <div className="flex min-h-0 flex-1">
            <Grid />
            <VerticalScroll />
          </div>
          <div className="bg-[linear-gradient(90deg,#e0e4e6_0%,#e2e5e5_20%,#ebe9e4_38%,#e8e9e0_100%)]">
            <SheetTabs />
          </div>
        </main>
        <div className="flex bg-[linear-gradient(180deg,#e3e5e4_0%,#e6e5e2_50%,#e8e9e0_100%)]">
          <SelectionPane />
          <SideStrip />
        </div>
      </div>
      <div className="bg-[linear-gradient(90deg,#e0e4e6_0%,#e2e5e5_16%,#ebe9e4_32%,#e8e9e0_100%)]">
        <StatusBar />
      </div>
      <div className="absolute right-0.5 bottom-[242px] h-[60px] w-2 rounded-full border border-white bg-[linear-gradient(180deg,#9a9a94_0_13px,#1fc866_13px,#2bcf6c_70%,#7eea6a)] shadow" />
      <ImeBadge />
      <SiteMark />
    </div>
  );
}
